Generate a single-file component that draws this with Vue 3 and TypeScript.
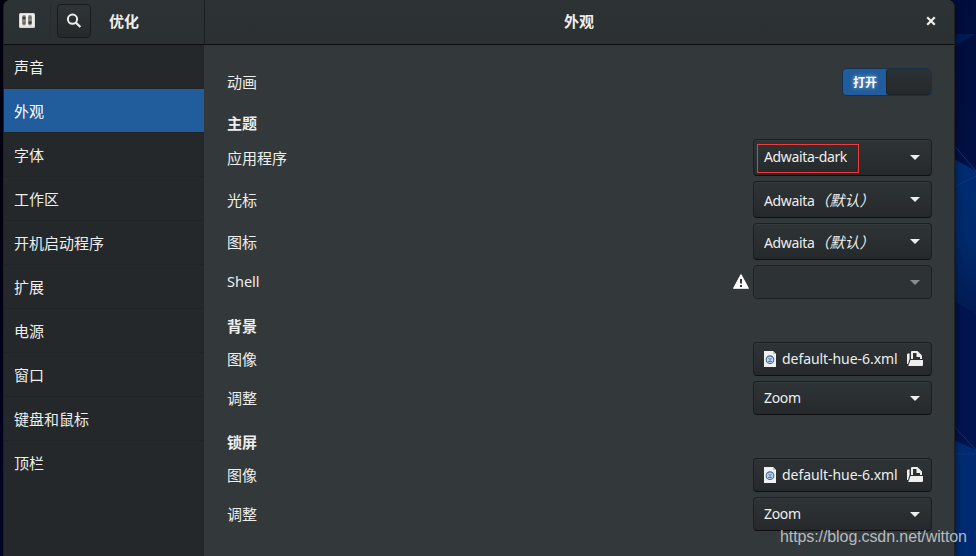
<script setup lang="ts">
interface Row {
  label: string
  kind: 'combo' | 'disabled' | 'file'
  value?: string
  suffix?: string
  tall?: boolean
  marked?: boolean
}
interface Section {
  title: string
  rows: Row[]
}

const pages: string[] = ['声音', '外观', '字体', '工作区', '开机启动程序', '扩展', '电源', '窗口', '键盘和鼠标', '顶栏']
const current = '外观'

const sections: Section[] = [
  {
    title: '主题',
    rows: [
      { label: '应用程序', kind: 'combo', value: 'Adwaita-dark', tall: true, marked: true },
      { label: '光标', kind: 'combo', value: 'Adwaita', suffix: '（默认）', tall: true },
      { label: '图标', kind: 'combo', value: 'Adwaita', suffix: '（默认）', tall: true },
      { label: 'Shell', kind: 'disabled' },
    ],
  },
  {
    title: '背景',
    rows: [
      { label: '图像', kind: 'file', value: 'default-hue-6.xml' },
      { label: '调整', kind: 'combo', value: 'Zoom' },
    ],
  },
  {
    title: '锁屏',
    rows: [
      { label: '图像', kind: 'file', value: 'default-hue-6.xml' },
      { label: '调整', kind: 'combo', value: 'Zoom' },
    ],
  },
]
</script>

<template>
  <div class="desktop">
    <svg class="wallpaper" width="24" height="556" viewBox="0 0 24 556">
      <defs>
        <linearGradient id="sky" x1="0" y1="0" x2="0" y2="1">
          <stop offset="0" stop-color="#000e3d" />
          <stop offset="1" stop-color="#001550" />
        </linearGradient>
        <linearGradient id="facet" x1="0" y1="0" x2="0" y2="1">
          <stop offset="0" stop-color="#002c74" />
          <stop offset="0.5" stop-color="#002a6c" />
          <stop offset="1" stop-color="#001850" />
        </linearGradient>
      </defs>
      <rect width="24" height="556" fill="url(#sky)" />
      <path d="M0 34H24L0 48Z" fill="#001a52" />
      <path d="M0 158L24 171V326L0 299Z" fill="url(#facet)" />
      <path d="M0 300L24 314V450L0 424Z" fill="#001450" />
      <path d="M0 439L24 450V556H0Z" fill="#002b72" />
      <path d="M0 143L24 171M0 188L24 176M0 424L24 450M0 454H24" stroke="#06377e" fill="none" />
    </svg>

    <div class="window">
      <header class="headerbar">
        <div class="head-left">
          <svg class="app-icon" width="16" height="15" viewBox="0 0 16 15">
            <rect width="16" height="15" rx="1.5" fill="#d8d7d2" />
            <rect x="1" y="1" width="14" height="12.5" rx="1" fill="#efeeea" />
            <rect x="3" y="2" width="4" height="10.5" rx="2" fill="#8a8a85" />
            <rect x="9" y="2" width="4" height="10.5" rx="2" fill="#8a8a85" />
            <circle cx="5" cy="5" r="1.5" fill="#3a3d3c" />
            <circle cx="11" cy="9.5" r="1.5" fill="#3a3d3c" />
            <circle cx="5" cy="10" r="1" fill="#5c5e5b" />
            <circle cx="11" cy="4.5" r="1" fill="#5c5e5b" />
          </svg>
          <span class="divider"></span>
          <button class="search" aria-label="搜索">
            <svg width="16" height="16" viewBox="0 0 16 16">
              <circle cx="6.5" cy="6.2" r="4.6" fill="none" stroke="#eeeeec" stroke-width="2" />
              <path d="M10 9.7L14.4 14" stroke="#eeeeec" stroke-width="2.3" />
            </svg>
          </button>
          <span class="head-title">优化</span>
        </div>
        <div class="head-right">
          <span class="head-title">外观</span>
          <button class="close" aria-label="关闭">
            <svg width="10" height="10" viewBox="0 0 10 10">
              <path d="M1.2 1.2L8.8 8.8M8.8 1.2L1.2 8.8" stroke="#eeeeec" stroke-width="2.2" />
            </svg>
          </button>
        </div>
      </header>

      <div class="body">
        <nav class="sidebar">
          <div v-for="p in pages" :key="p" class="nav-row" :class="{ selected: p === current }">{{ p }}</div>
        </nav>

        <main class="content">
          <div class="row switch-row">
            <span>动画</span>
            <div class="switch">
              <span class="on">打开</span>
              <span class="slider"></span>
            </div>
          </div>

          <section v-for="s in sections" :key="s.title">
            <h2>{{ s.title }}</h2>
            <div v-for="r in s.rows" :key="r.label" class="row" :class="{ tall: r.tall }">
              <span class="label" :class="{ latin: r.kind === 'disabled' }">{{ r.label }}</span>
              <svg v-if="r.kind === 'disabled'" class="warn" width="16" height="16" viewBox="0 0 16 16">
                <path d="M8 0.8L15.3 14.2H0.7Z" fill="#fff" stroke="#fff" stroke-width="1.2" stroke-linejoin="round" />
                <path d="M7 5H9V9.6H7ZM7 11H9V13H7Z" fill="#33393b" />
              </svg>
              <div class="control" :class="r.kind">
                <svg v-if="r.kind === 'file'" class="doc" width="12" height="16" viewBox="0 0 12 16">
                  <path d="M0 0H9L12 3V16H0Z" fill="#f1f1ef" />
                  <path d="M9 0V3H12Z" fill="#c2c4c2" />
                  <circle cx="6" cy="8.7" r="3.8" fill="#c2d2e8" stroke="#42689e" stroke-width="1.1" />
                  <path d="M4 6.5L6 8.5L8 6.5M4 10.5H8M6 8V11" fill="none" stroke="#5b7eb0" stroke-width="1" />
                </svg>
                <span class="value" :class="{ marked: r.marked, suffixed: r.suffix }">{{ r.value }}<i v-if="r.suffix">{{ r.suffix }}</i></span>
                <svg v-if="r.kind === 'file'" class="open" width="16" height="15" viewBox="0 0 16 15">
                  <path d="M0 3.5Q0 2.5 1 2.5H2.6V8L1 13H0Z" fill="#eeeeec" />
                  <path d="M4 8V1Q4 0 5 0H10.5L15 4.5V8H13V6H9.5V2H6V8Z" fill="#eeeeec" />
                  <path d="M3.4 9H16V14Q16 15 15 15H1.2Z" fill="#eeeeec" />
                </svg>
                <svg v-else class="arrow" width="10" height="5" viewBox="0 0 10 5">
                  <path d="M0 0H10L5 5Z" fill="currentColor" />
                </svg>
              </div>
            </div>
          </section>
        </main>
      </div>
    </div>

    <div class="watermark">https://blog.csdn.net/witton</div>
  </div>
</template>

<style>
body {
  margin: 0;
  overflow: hidden;
}
</style>

<style scoped>
.desktop {
  position: relative;
  box-sizing: border-box;
  width: 976px;
  height: 556px;
  padding-left: 3px;
  overflow: hidden;
  background: linear-gradient(#00000f, #00001a 50%, #00062c);
  color: #eeeeec;
  font: 15px/22px "Noto Sans", "Noto Sans CJK SC", sans-serif;
}
.wallpaper {
  position: absolute;
  right: 0;
  top: 0;
}
.window {
  position: relative;
  box-sizing: border-box;
  width: 952px;
  height: 556px;
  display: flex;
  flex-direction: column;
  border: solid #1d2122;
  border-width: 0 1px;
  border-radius: 7px 7px 0 0;
  overflow: hidden;
  background: #33393b;
  box-shadow: 0 0 8px rgba(0, 0, 0, 0.55);
}
.headerbar {
  display: flex;
  flex: none;
  height: 44px;
  background: linear-gradient(#2d3234, #2b3032);
  border-bottom: 1px solid #0c0e0e;
}
.head-left {
  box-sizing: border-box;
  display: flex;
  align-items: center;
  width: 201px;
  padding-left: 15px;
  border-right: 1px solid #1c1f20;
}
.app-icon {
  margin-top: -4px;
}
.divider {
  width: 1px;
  height: 34px;
  margin: 0 6px 2px 15px;
  background: #272b2d;
}
button {
  padding: 0;
  border: 0;
  background: none;
  display: flex;
  align-items: center;
  justify-content: center;
}
.search {
  box-sizing: border-box;
  width: 34px;
  height: 34px;
  margin: 0 18px 2px 0;
  border: 1px solid #191c1d;
  border-radius: 4px;
  background: linear-gradient(#2f3537, #26292b);
}
.head-title {
  font-weight: 700;
  font-size: 15px;
  padding-bottom: 3px;
}
.head-right {
  flex: 1;
  display: grid;
  grid-template-columns: 45px 1fr 46px;
  align-items: center;
}
.head-right .head-title {
  grid-column: 2;
  text-align: center;
}
.close {
  margin-bottom: 2px;
}
.body {
  display: flex;
  flex: 1;
  min-height: 0;
}
.sidebar {
  width: 200px;
  background: #24282a;
}
.nav-row {
  box-sizing: border-box;
  height: 44px;
  padding: 11px 10px 10px;
  border-bottom: 1px solid #212426;
}
.nav-row:last-child {
  border-color: transparent;
}
.nav-row.selected {
  background: #215d9c;
  background-clip: padding-box;
  color: #fff;
}
.content {
  flex: 1;
  padding: 22px 22px 0 23px;
}
.row {
  display: flex;
  align-items: center;
  height: 34px;
  margin-bottom: 5px;
}
.row.tall {
  height: 37px;
}
.switch-row {
  height: 29px;
  margin-bottom: 16px;
}
.switch-row > span,
.label {
  margin-right: auto;
}
.switch {
  box-sizing: border-box;
  display: flex;
  width: 90px;
  height: 28px;
  border: 1px solid #16304d;
  border-radius: 4px;
  background: #215d9c;
}
.on {
  width: 43px;
  font-size: 12px;
  font-weight: 700;
  line-height: 28px;
  text-align: center;
  text-indent: 1px;
  color: #fff;
  text-shadow: 0 0 4px rgba(255, 255, 255, 0.55);
}
.slider {
  flex: 1;
  border: solid #1d2326;
  border-width: 0 0 1px 1px;
  border-radius: 3px;
  background: linear-gradient(#2c3133, #26292b);
}
h2 {
  height: 22px;
  margin: 0 0 5px;
  font-size: 15px;
  line-height: 22px;
}
section + section h2 {
  margin: 16px 0 5px;
}
.control {
  box-sizing: border-box;
  display: flex;
  align-items: center;
  width: 179px;
  height: 100%;
  padding: 0 11px 0 10px;
  border: 1px solid #1b1f20;
  border-bottom-color: #0d0f10;
  border-radius: 4px;
  background: linear-gradient(#2e3436, #26292b);
  box-shadow: inset 0 1px #353b3d;
}
.control.disabled {
  background: #2d3234;
  border-color: #1d2122;
  box-shadow: none;
  color: #8b8e8f;
}
.control.file {
  padding-right: 8px;
}
.latin {
  font-size: 14.5px;
  padding-bottom: 3px;
}
.value {
  flex: 1;
  white-space: nowrap;
  font-size: 14px;
  letter-spacing: -0.35px;
}
.file .value {
  letter-spacing: -0.06px;
}
.value i {
  font-size: 15px;
  letter-spacing: 0;
}
.value.suffixed {
  padding-top: 2px;
}
.value.marked {
  box-sizing: border-box;
  flex: none;
  width: 102px;
  height: 29px;
  margin: 1px auto 0 -7px;
  padding-left: 6px;
  border: 1px solid #f23a3a;
  line-height: 24px;
}
.doc {
  margin-right: 6px;
}
.arrow {
  flex: none;
  margin-left: auto;
}
.open {
  flex: none;
  margin-bottom: 1px;
}
.warn {
  margin-right: 4px;
}
.watermark {
  position: absolute;
  left: 780px;
  top: 526px;
  font: 16px/22px "Liberation Sans", sans-serif;
  letter-spacing: -0.09px;
  color: rgba(220, 222, 224, 0.8);
  white-space: nowrap;
}
</style>
